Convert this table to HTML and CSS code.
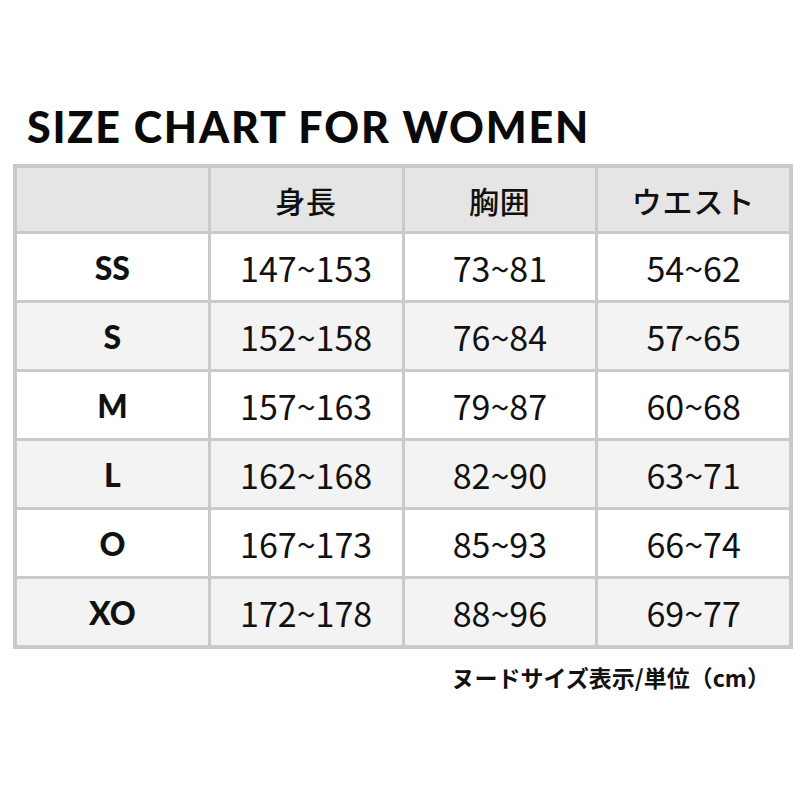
FILE: index.html
```html
<!DOCTYPE html>
<html lang="ja">
<head>
<meta charset="utf-8">
<title>Size Chart for Women</title>
<link rel="stylesheet" href="styles.css">
</head>
<body>
<div class="page">
  <h1 class="title">SIZE CHART FOR WOMEN</h1>
  <div class="chart">
    <div class="cell head"></div>
    <div class="cell head jp">身長</div>
    <div class="cell head jp">胸囲</div>
    <div class="cell head jp">ウエスト</div>

    <div class="cell size">SS</div>
    <div class="cell num">147~153</div>
    <div class="cell num">73~81</div>
    <div class="cell num">54~62</div>

    <div class="cell size alt">S</div>
    <div class="cell num alt">152~158</div>
    <div class="cell num alt">76~84</div>
    <div class="cell num alt">57~65</div>

    <div class="cell size">M</div>
    <div class="cell num">157~163</div>
    <div class="cell num">79~87</div>
    <div class="cell num">60~68</div>

    <div class="cell size alt">L</div>
    <div class="cell num alt">162~168</div>
    <div class="cell num alt">82~90</div>
    <div class="cell num alt">63~71</div>

    <div class="cell size">O</div>
    <div class="cell num">167~173</div>
    <div class="cell num">85~93</div>
    <div class="cell num">66~74</div>

    <div class="cell size alt">XO</div>
    <div class="cell num alt">172~178</div>
    <div class="cell num alt">88~96</div>
    <div class="cell num alt">69~77</div>
  </div>
  <p class="note">ヌードサイズ表示/単位（cm）</p>
</div>
</body>
</html>
```

FILE: styles.css
```css
html, body {
  margin: 0;
  padding: 0;
  background: #ffffff;
}

.page {
  width: 780px;
  padding: 101px 7px 0 13px;
  color: #111111;
}

.title {
  margin: 0 0 11px 14px;
  font-family: "Lato", "Liberation Sans", sans-serif;
  font-weight: 900;
  font-size: 43px;
  line-height: 52px;
  letter-spacing: 1.8px;
  color: #0a0a0a;
}

.chart {
  display: grid;
  grid-template-columns: 1fr 1fr 1fr 1fr;
  grid-template-rows: 63px repeat(6, 66px);
  gap: 3px;
  padding: 4px;
  background: #cacaca;
}

.cell {
  display: flex;
  align-items: center;
  justify-content: center;
  background: #ffffff;
  color: #111111;
}

.cell.alt {
  background: #f3f3f3;
}

.cell.head {
  background: #e5e5e5;
}

.jp {
  font-family: "Noto Sans CJK JP", sans-serif;
  font-weight: 500;
  font-size: 30px;
  letter-spacing: 1px;
}

.size {
  font-family: "Lato", "Liberation Sans", sans-serif;
  font-weight: 900;
  font-size: 32px;
}

.num {
  font-family: "Noto Sans CJK JP", sans-serif;
  font-weight: 400;
  font-size: 34px;
}

.note {
  margin: 13px 23px 0 0;
  text-align: right;
  font-family: "Noto Sans CJK JP", sans-serif;
  font-weight: 700;
  font-size: 23px;
  line-height: 30px;
  color: #111111;
}
```
